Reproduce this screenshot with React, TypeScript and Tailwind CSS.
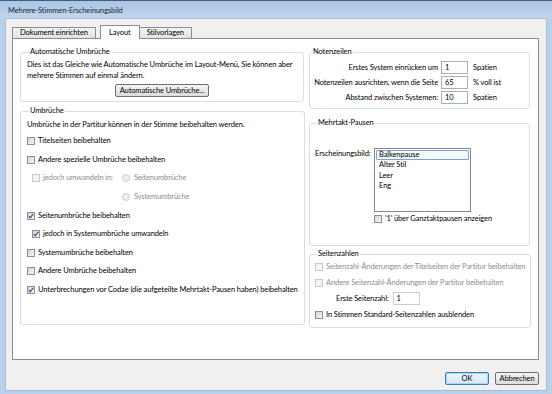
import clsx from 'clsx';

function Box({ checked, disabled }: { checked?: boolean; disabled?: boolean }) {
    return (
        <span
            className={clsx(
                'w-[8px] h-[8px] border shrink-0 flex items-center justify-center',
                disabled
                    ? 'border-[#c9c9c9] bg-[#f3f3f3]'
                    : 'border-[#8f8f8f] bg-gradient-to-br from-[#d4d4d4] to-[#f7f7f7]'
            )}
        >
            {checked && (
                <svg width="6" height="6" viewBox="0 0 6 6">
                    <path d="M0.8 3.2 L2.3 4.8 L5.2 0.9" stroke="#3f5a9a" strokeWidth="1.3" fill="none" />
                </svg>
            )}
        </span>
    );
}

function Check({ label, checked, disabled, className }: { label: string; checked?: boolean; disabled?: boolean; className?: string }) {
    return (
        <div className={clsx('flex items-center gap-[3px] h-[10px] whitespace-nowrap', className)}>
            <Box checked={checked} disabled={disabled} />
            <span className={disabled ? 'text-[#8d8d8d]' : 'text-black'}>{label}</span>
        </div>
    );
}

function Radio({ label }: { label: string }) {
    return (
        <div className="flex items-center gap-[4px] h-[10px] whitespace-nowrap">
            <span className="w-[8px] h-[8px] rounded-full border border-[#cdcdcd] bg-[#eeeeee] shrink-0" />
            <span className="text-[#8d8d8d]">{label}</span>
        </div>
    );
}

function Group({ title, className, children }: { title: string; className?: string; children: React.ReactNode }) {
    return (
        <fieldset className={clsx('border border-[#d5dfe5] rounded-[3px] shadow-[inset_1px_1px_0_#fff]', className)}>
            <legend className="ml-[2px] px-[1px] leading-[10px]">{title}</legend>
            {children}
        </fieldset>
    );
}

function Field({ value, className }: { value: string; className?: string }) {
    return (
        <span className={clsx('h-[13px] border border-[#abadb3] bg-white pl-[3px] flex items-center', className)}>
            {value}
        </span>
    );
}

export default function App() {
    return (
        <div className="w-[552px] h-[394px] bg-[#b9d1ea] border-t border-[#4d5d70] flex flex-col font-['Lato',sans-serif] text-[7.5px] tracking-[-0.1px] leading-[10px] text-black overflow-hidden">
            {/* title bar */}
            <div className="h-[17px] shrink-0 bg-gradient-to-b from-[#a9c5e6] to-[#c2d6ee] pl-[8px] flex items-center pt-[2px] text-[#1e1e1e]">
                Mehrere-Stimmen-Erscheinungsbild
            </div>

            <div className="flex-1 mx-[5px] mb-[3px] bg-[#f0f0f0] border border-[#a9bcd3] flex flex-col px-[6px] pt-[6px]">
                {/* tabs */}
                <div className="flex items-end h-[13px] relative z-10">
                    <div className="h-[11px] px-[7px] border border-b-0 border-[#898c95] bg-gradient-to-b from-[#f2f2f2] to-[#e3e3e3] flex items-center">
                        Dokument einrichten
                    </div>
                    <div className="h-[14px] -mb-[1px] ml-[4px] px-[8px] border border-b-0 border-[#898c95] bg-white flex items-center">
                        Layout
                    </div>
                    <div className="h-[11px] px-[7px] -ml-px border border-b-0 border-[#898c95] bg-gradient-to-b from-[#f2f2f2] to-[#e3e3e3] flex items-center">
                        Stilvorlagen
                    </div>
                </div>

                {/* panel */}
                <div className="h-[322px] shrink-0 bg-white border border-[#898c95] mr-[1px] pl-[7px] pr-[8px] pt-[8px] flex gap-[5px]">
                    {/* left column */}
                    <div className="w-[284px] flex flex-col gap-[4px]">
                        <Group title="Automatische Umbrüche" className="h-[55px] px-[6px]">
                            <p className="mt-[2px] leading-[11px]">
                                Dies ist das Gleiche wie Automatische Umbrüche im Layout-Menü, Sie können aber mehrere Stimmen auf einmal ändern.
                            </p>
                            <div className="flex justify-center mt-[3px]">
                                <span className="h-[13px] px-[4px] border border-[#707070] rounded-[2px] bg-gradient-to-b from-[#f4f4f4] to-[#dcdcdc] flex items-center">
                                    Automatische Umbrüche...
                                </span>
                            </div>
                        </Group>

                        <Group title="Umbrüche" className="h-[219px] px-[6px]">
                            <p className="mt-[4px]">Umbrüche in der Partitur können in der Stimme beibehalten werden.</p>
                            <div className="flex flex-col gap-[8.5px] mt-[6px]">
                                <Check label="Titelseiten beibehalten" />
                                <Check label="Andere spezielle Umbrüche beibehalten" />
                                <div className="flex items-start gap-[9px] pl-[5px]">
                                    <Check label="jedoch umwandeln in:" disabled />
                                    <div className="flex flex-col gap-[9px]">
                                        <Radio label="Seitenumbrüche" />
                                        <Radio label="Systemumbrüche" />
                                    </div>
                                </div>
                                <Check label="Seitenumbrüche beibehalten" checked />
                                <Check label="jedoch in Systemumbrüche umwandeln" checked className="pl-[5px]" />
                                <Check label="Systemumbrüche beibehalten" />
                                <Check label="Andere Umbrüche beibehalten" />
                                <Check label="Unterbrechungen vor Codae (die aufgeteilte Mehrtakt-Pausen haben) beibehalten" checked />
                            </div>
                        </Group>
                    </div>

                    {/* right column */}
                    <div className="w-[221px] flex flex-col">
                        <Group title="Notenzeilen" className="h-[62px]">
                            <div className="grid grid-cols-[1fr_27px_58px] gap-x-[3px] gap-y-[2px] items-center mt-[4px] whitespace-nowrap">
                                <span className="text-right">Erstes System einrücken um</span>
                                <Field value="1" />
                                <span className="pl-[2px]">Spatien</span>
                                <span className="text-right">Notenzeilen ausrichten, wenn die Seite</span>
                                <Field value="65" />
                                <span className="pl-[2px]">% voll ist</span>
                                <span className="text-right">Abstand zwischen Systemen:</span>
                                <Field value="10" />
                                <span className="pl-[2px]">Spatien</span>
                            </div>
                        </Group>

                        <Group title="Mehrtakt-Pausen" className="h-[128px] mt-[9px] px-[5px]">
                            <div className="flex gap-[4px] mt-[20px]">
                                <span className="w-[55px] pt-[1px] whitespace-nowrap">Erscheinungsbild:</span>
                                <div className="w-[97px] h-[64px] border border-[#828790] bg-white p-[1px] flex flex-col">
                                    <span className="h-[10px] border border-[#7da2ce] rounded-[1px] bg-[#f3f8fe] pl-[2px] flex items-center">Balkenpause</span>
                                    <span className="h-[10.5px] pl-[3px] flex items-center">Alter Stil</span>
                                    <span className="h-[10.5px] pl-[3px] flex items-center">Leer</span>
                                    <span className="h-[10.5px] pl-[3px] flex items-center">Eng</span>
                                </div>
                            </div>
                            <Check label="'1' über Ganztaktpausen anzeigen" className="ml-[59px] mt-[2px]" />
                        </Group>

                        <Group title="Seitenzahlen" className="h-[79px] mt-[3px] px-[5px]">
                            <div className="flex flex-col gap-[5.5px] mt-[3px]">
                                <Check label="Seitenzahl-Änderungen der Titelseiten der Partitur beibehalten" disabled />
                                <Check label="Andere Seitenzahl-Änderungen der Partitur beibehalten" disabled />
                                <div className="flex items-center gap-[4px] pl-[21px] -my-[1px]">
                                    <span>Erste Seitenzahl:</span>
                                    <Field value="1" className="w-[27px] h-[11px] border-[#c9cdd3]" />
                                </div>
                                <Check label="In Stimmen Standard-Seitenzahlen ausblenden" />
                            </div>
                        </Group>
                    </div>
                </div>

                {/* buttons */}
                <div className="flex justify-end gap-[6px] mt-[12px] mr-[1px]">
                    <span className="w-[44px] h-[13px] border border-[#3c7fb1] rounded-[2px] bg-gradient-to-b from-[#eaf6fd] to-[#d7e9f5] shadow-[inset_0_0_0_1px_#a6d6f3] flex items-center justify-center">
                        OK
                    </span>
                    <span className="w-[44px] h-[13px] border border-[#707070] rounded-[2px] bg-gradient-to-b from-[#f4f4f4] to-[#dcdcdc] flex items-center justify-center">
                        Abbrechen
                    </span>
                </div>
            </div>
        </div>
    );
}
